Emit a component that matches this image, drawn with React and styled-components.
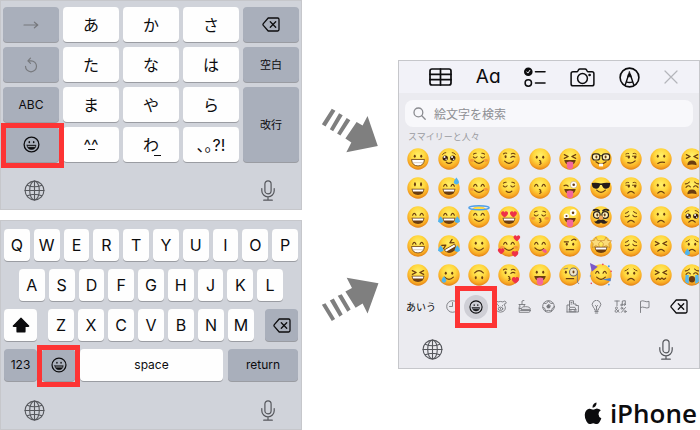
import React from "react";
import styled, { createGlobalStyle, css } from "styled-components";

const GlobalStyle = createGlobalStyle`
  *, *::before, *::after { box-sizing: border-box; }
  body {
    margin: 0;
    background: #fff;
    color: #0c0c0e;
    font-family: Inter, "Noto Sans CJK JP", sans-serif;
  }
  button {
    margin: 0;
    padding: 0;
    border: 0;
    background: none;
    color: inherit;
    font: inherit;
  }
  svg { display: block; flex: none; }
`;

/* ---------- layout ---------- */

const Page = styled.main`
  display: grid;
  grid-template-columns: 302fr 96fr 302fr;
  min-height: 100vh;
`;

const KeyboardColumn = styled.div`
  display: flex;
  flex-direction: column;
  gap: 10px;
`;

const ArrowColumn = styled.div`
  display: flex;
  flex-direction: column;
  align-items: center;
  gap: 122px;
  padding-top: 107px;
`;

const ResultColumn = styled.div`
  display: flex;
  flex-direction: column;
  min-width: 0;
  padding-top: 60px;
`;

const Panel = styled.section`
  display: flex;
  flex-direction: column;
  min-height: ${(p) => (p.$tall ? "309px" : "210px")};
  border: 1px solid #c6c7cb;
  background: ${(p) => (p.$tall ? "#ebebf0" : "#d0d3da")};
  overflow: ${(p) => (p.$tall ? "hidden" : "visible")};
`;

const PanelFooter = styled.div`
  display: flex;
  flex: 1;
  align-items: flex-end;
  justify-content: space-between;
  padding: 0 26px 8px 23px;
  color: #55575c;
`;

/* ---------- keys ---------- */

const redFrame = css`
  position: relative;
  &::after {
    content: "";
    position: absolute;
    inset: ${(p) => p.$frame};
    border: 5px solid #fd3434;
    pointer-events: none;
  }
`;

const Key = styled.button`
  display: flex;
  align-items: center;
  justify-content: center;
  min-width: 0;
  border-radius: 4px;
  background: ${(p) => (p.$dark ? "#a9afbb" : "#fefefe")};
  box-shadow: 0 1px 0 #9a9ca2;
  color: ${(p) => (p.$faded ? "#77797d" : "#0c0c0e")};
  font-size: ${(p) => p.$size || 16}px;
  line-height: 20px;
  ${(p) => p.$frame && redFrame}
`;

const PunctuationKey = styled(Key)`
  font-feature-settings: "halt";
`;

const MarkedGlyph = styled.span`
  position: relative;
  &::after {
    content: "";
    position: absolute;
    right: ${(p) => (p.$centered ? "calc(50% - 4px)" : "-2px")};
    bottom: ${(p) => (p.$centered ? "5px" : "-1px")};
    width: 7px;
    height: 1px;
    background: currentColor;
  }
`;

const KanaGrid = styled.div`
  display: grid;
  grid-template-columns: repeat(5, 1fr);
  grid-auto-rows: 35px;
  gap: 5px 4px;
  padding: 6px 2px 0;
`;

const TallKey = styled(Key)`
  grid-row: span 2;
`;

const QwertyRows = styled.div`
  display: flex;
  flex-direction: column;
  gap: 8px;
  padding: 8px 3px 0;
`;

const KeyRow = styled.div`
  display: grid;
  grid-template-columns: ${(p) => p.$columns};
  grid-auto-rows: 32px;
  gap: ${(p) => p.$gap || 4}px;
  padding: 0 ${(p) => p.$inset || 0}px;
`;

/* ---------- emoji panel ---------- */

const Toolbar = styled.div`
  display: flex;
  align-items: center;
  justify-content: space-between;
  height: 32px;
  padding: 0 21px 0 30px;
  background: #f2f2f8;
`;

const FontButton = styled.button`
  font-size: 19px;
  line-height: 24px;
  font-feature-settings: "cv11";
`;

const SearchBox = styled.label`
  display: flex;
  align-items: center;
  gap: 8px;
  height: 27px;
  margin: 7px 6px 0;
  padding: 0 8px;
  border-radius: 8px;
  background: #f8f8fb;
  color: #8a8b90;
`;

const SearchInput = styled.input`
  flex: 1;
  min-width: 0;
  padding: 0;
  border: 0;
  outline: 0;
  background: none;
  font: 12px/18px "Noto Sans CJK JP", sans-serif;
  color: #333;
  &::placeholder { color: #8e8f94; opacity: 1; }
`;

const GroupTitle = styled.h2`
  margin: 4px 0 0 9px;
  color: #9a9ba0;
  font-size: 9px;
  font-weight: 400;
  line-height: 12px;
`;

const EmojiGrid = styled.div`
  display: grid;
  grid-template-columns: repeat(10, 1fr);
  grid-auto-rows: 29px;
  margin: 1px -8px 0 4px;
`;

const EmojiButton = styled.button`
  display: flex;
  align-items: center;
  justify-content: center;
`;

const CategoryBar = styled.div`
  display: flex;
  align-items: center;
  height: 35px;
  padding: 0 11px 0 7px;
`;

const KanaSwitch = styled.button`
  width: 34px;
  text-align: left;
  font-size: 10px;
  line-height: 16px;
  white-space: nowrap;
`;

const CategoryList = styled.div`
  display: grid;
  grid-template-columns: repeat(9, 24px);
  flex: 1;
`;

const CategoryButton = styled.button`
  display: flex;
  align-items: center;
  justify-content: center;
  height: 24px;
  border-radius: 12px;
  color: ${(p) => (p.$frame ? "#0c0c0e" : "#77787d")};
  background: ${(p) => (p.$frame ? "#cfcfd6" : "none")};
  ${(p) => p.$frame && redFrame}
`;

const Brand = styled.div`
  display: flex;
  align-items: center;
  justify-content: flex-end;
  gap: 8px;
  margin-top: auto;
  padding: 0 3px 2px 0;
`;

const BrandName = styled.span`
  font-family: "Open Sans", sans-serif;
  font-size: 26px;
  font-weight: 600;
  line-height: 30px;
`;

/* ---------- icons ---------- */

const Icon = ({ w = 16, h = w, box = `0 0 ${w} ${h}`, sw = 1.2, children }) => (
  <svg width={w} height={h} viewBox={box} fill="none" stroke="currentColor" strokeWidth={sw}
    strokeLinecap="round" strokeLinejoin="round" aria-hidden="true">{children}</svg>
);

const GlobeIcon = () => (
  <Icon w={21} sw={1.1}>
    <circle cx="10.5" cy="10.5" r="9.4" />
    <ellipse cx="10.5" cy="10.5" rx="4.8" ry="9.4" />
    <path d="M10.5 1v19M1 10.5h19M3.2 5.2q7.3 3.2 14.6 0M3.2 15.8q7.3-3.2 14.6 0" />
  </Icon>
);
const MicIcon = () => (
  <Icon w={14} h={21} sw={1.2}>
    <rect x="3.9" y=".8" width="6.2" height="13" rx="3.1" />
    <path d="M.8 8.6v2.2a6.2 6 0 0 0 12.4 0V8.6M7 16.8v3.2M2.7 20.2h8.6" />
  </Icon>
);
const DeleteIcon = () => (
  <Icon w={18} h={15} sw={1.3}>
    <path d="M6.2 1h9.4q1.4 0 1.4 1.4v10.2q0 1.4-1.4 1.4H6.2L1.3 8.4q-.7-.9 0-1.8zM8.3 4.8l5.4 5.4M13.7 4.8l-5.4 5.4" />
  </Icon>
);
const ArrowIcon = () => (
  <Icon w={16} h={10}><path d="M1 5h13.5M11.4 2.2L14.8 5l-3.4 2.8" /></Icon>
);
const UndoIcon = () => (
  <Icon w={14} h={16}><path d="M4 3.8H7A5.5 5.5 0 1 1 1.5 9.3M6.5 1.2L3.9 3.8l2.6 2.6" /></Icon>
);
const ShiftIcon = () => (
  <Icon w={18} h={16}>
    <path d="M9 1.2L1.4 8.8q-.4.6.4.6H5v5q0 .6.6.6h6.8q.6 0 .6-.6v-5h3.2q.8 0 .4-.6z" fill="currentColor" />
  </Icon>
);
const SmileIcon = ({ size = 17 }) => (
  <Icon w={size} box="0 0 17 17" sw={1.3}>
    <circle cx="8.5" cy="8.5" r="7.4" />
    <path d="M4 9.2h9q-.5 4.3-4.5 4.3T4 9.2z" fill="currentColor" strokeWidth=".5" />
    <path d="M5.2 10.6h6.6" stroke="#b9bdc6" strokeWidth=".9" />
    <ellipse cx="6.3" cy="6.2" rx=".8" ry="1.1" fill="currentColor" stroke="none" />
    <ellipse cx="10.7" cy="6.2" rx=".8" ry="1.1" fill="currentColor" stroke="none" />
  </Icon>
);
const TableIcon = () => (
  <Icon w={23} h={18} sw={1.7}>
    <rect x="1" y="1" width="21" height="16" rx="2" />
    <path d="M1 6.3h21M1 11.7h21M11.5 1v16" />
  </Icon>
);
const ChecklistIcon = () => (
  <Icon w={22} h={21} sw={1.6}>
    <circle cx="4.3" cy="4.7" r="3.5" fill="currentColor" />
    <path d="M2.8 4.9l1.1 1.2 2-2.8" stroke="#f2f2f8" strokeWidth="1" />
    <circle cx="4.3" cy="16" r="3.2" strokeWidth="1.5" />
    <path d="M11.5 4.7h9.5M11.5 16h9.5" />
  </Icon>
);
const CameraIcon = () => (
  <Icon w={25} h={19} sw={1.5}>
    <path d="M3 3.8h3.9q.6 0 1-.8l.6-1.1q.5-.9 1.4-.9h5.2q.9 0 1.4.9l.6 1.1q.4.8 1 .8H22q1.9 0 1.9 1.9v10.2q0 1.9-1.9 1.9H3q-1.9 0-1.9-1.9V5.7Q1.1 3.8 3 3.8z" />
    <circle cx="12.5" cy="10.5" r="4.9" />
    <circle cx="19.6" cy="7" r=".6" fill="currentColor" />
  </Icon>
);
const PenIcon = () => (
  <Icon w={21} sw={1.6}>
    <circle cx="10.5" cy="10.5" r="9.4" />
    <path d="M6.2 18L9.7 7.5h1.6L14.8 18M7.4 14.8q3.1 1.4 6.2 0" strokeWidth="1.4" />
    <path d="M10.5 4.6l1.7 5.2H8.8z" fill="currentColor" strokeWidth=".6" />
  </Icon>
);
const CloseIcon = () => (
  <Icon w={14} sw={1.2}><path d="M1 1l12 12M13 1L1 13" stroke="#b4b5ba" /></Icon>
);
const SearchIcon = () => (
  <Icon w={13} sw={1.3}><circle cx="5.4" cy="5.4" r="4.4" /><path d="M8.8 8.8l3.4 3.4" /></Icon>
);

const categories = [
  ["最近使った絵文字", <Icon w={13} sw={0.9}><circle cx="6.5" cy="6.5" r="5.8" /><path d="M6.5 2.5v4H3.5" /></Icon>],
  ["スマイリーと人々", <SmileIcon size={14} />],
  ["動物と自然", <Icon w={13} sw={0.9}><path d="M3 4.2Q.4 4 .8 2.2 2 .2 4.2 1.9q2.3-.9 4.6 0Q11 .2 12.2 2.2q.4 1.8-2.2 2 1.9 2.6 1.2 5-1.2 3-4.7 3t-4.7-3q-.7-2.4 1.2-5z" /><ellipse cx="6.5" cy="8.8" rx="2.3" ry="1.7" /><path d="M4.5 5.5v.4M8.5 5.5v.4M6.5 8.4v.8" /></Icon>],
  ["食べ物と飲み物", <Icon w={13} sw={0.9}><path d="M1 4.5h6M1.6 4.5l.4 2.5M6.5 4.5L6 6.5M4 4.3V1l2-.6M3 9q0-2.3 4.7-2.3T12.4 9zM2.6 10.5h9.8M1.2 7v5.3h9.6q1.4 0 1.6-1.8M1.2 8.5h1.7" /></Icon>],
  ["活動", <Icon w={13} sw={0.9}><circle cx="6.5" cy="6.5" r="5.8" /><path d="M6.5 4.6L4.8 5.9l.6 2h2.2l.6-2z" fill="currentColor" /><path d="M2 3.2l2.3.3L6.5 1M11 3.2l-2.3.3L6.5 1M.9 7.5l1.7.6 1 2.9M12.1 7.5l-1.7.6-1 2.9M3.6 11l2.9-.6 2.9.6" /></Icon>],
  ["旅行と場所", <Icon w={13} sw={0.9}><path d="M1 12V5h2.5V.8h4V4H10v1M3.5 5v2M5 2.5h1M5 4h1M1 12h11.4V5.5H10M4.3 7.3h4.6l1 2.2v2.3H3.3V9.5zM3.3 9.5h6.6M4.6 10.8h.5M8.2 10.8h.5" /></Icon>],
  ["物", <Icon w={13} h={14} sw={0.9}><path d="M4.8 9.8Q4.7 8.5 3.3 7.2a4.2 4.2 0 1 1 6.4 0Q8.3 8.5 8.2 9.8zM4.9 11.5h3.2M5.3 13h2.4M6.5 9.5V6.5L5.3 5.5M6.5 6.5l1.2-1" /></Icon>],
  ["記号", <Icon w={13} sw={0.9}><path d="M.8 1h4.5M3 1v4.8M8.3 4.7V1l3-.3v3.6M5 12.3L1.5 8.4q-.2-1.3 1-1.3 1.3.1.9 1.4L1 10.6q-.3 1.6 1.3 1.7 1.8-.2 2.5-2.4M11.5 7.5l-4 4.8" /><circle cx="7.5" cy="5" r=".8" /><circle cx="10.5" cy="4.6" r=".8" /><circle cx="7.9" cy="8.3" r=".9" /><circle cx="11.2" cy="11.5" r=".9" /></Icon>],
  ["旗", <Icon w={11} h={13} sw={0.9}><path d="M1.5 12.5V1.3q2.2-1 4.3 0t4.2 0v6.2q-2.1 1-4.2 0t-4.3 0" /></Icon>],
];

const AppleLogo = () => (
  <svg width="18" height="23" viewBox="0 0 19 24" fill="#0c0c0e" aria-hidden="true">
    <path d="M13.2.4q.3 2.2-1.1 3.9-1.3 1.6-3.1 1.5-.3-2 1.2-3.7Q11.5.7 13.2.4zM17.7 8.5q-2.5 1.6-2.4 4.3.1 3 3 4.3-.7 2.3-2 4.1-1.3 2-2.9 2-.9 0-1.9-.5-1.8-.8-3.6 0-1 .5-1.8.5-1.8.1-3.4-2.7Q.6 17.3.8 13.2 1.2 8 5.4 7q1.2-.2 2.5.4 1.5.6 2 .5.5 0 2-.7 1.3-.5 2.5-.3 2.1.2 3.3 1.6z" />
  </svg>
);

const ArrowDown = () => (
  <svg width="60" height="47" viewBox="510 20 180 142" fill="#7f7f7f" aria-hidden="true">
    <path d="M545 25l11 6-30 48-11-7zM567 39l11 6-29 48-10-6zM590 53l11 7-30 46-10-6zM620 65l18 11 15-29 31 91-95 19 15-30-18-12z" />
  </svg>
);
const ArrowUp = () => (
  <svg width="60" height="47" viewBox="510 183 180 142" fill="#7f7f7f" aria-hidden="true">
    <path d="M515 270l11-5 29 48-10 6zM539 257l12-6 27 48-10 7zM563 243l12-5 27 46-10 7zM586 230l20-11-16-31 96 17-33 91-15-30-21 13z" />
  </svg>
);

/* ---------- emoji faces ---------- */

const B = "#6b3d10";
const heart = (x, y, s) => (
  <path transform={`translate(${x} ${y}) scale(${s})`} fill="#ee3148"
    d="M0 3.4Q-4 .8-3.6-1.4-3-3.5-1-3-.2-2.7 0-1.7.2-2.7 1-3 3-3.5 3.6-1.4 4 .8 0 3.4z" />
);
const Stroke = ({ d, c = B, w = 1.3 }) => (
  <path d={d} fill="none" stroke={c} strokeWidth={w} strokeLinecap="round" strokeLinejoin="round" />
);
const Dot = ({ x, y = 9, rx = 1.1, ry = 1.6, c = B }) => <ellipse cx={x} cy={y} rx={rx} ry={ry} fill={c} />;
const drop = (x, y, s = 1) => (
  <path transform={`translate(${x} ${y}) scale(${s})`} fill="#4fb4ee" d="M0-3.2Q2.6 0 2.3 1.4 1.8 3 0 3T-2.3 1.4Q-2.6 0 0-3.2z" />
);
const star = (x, y) => (
  <path transform={`translate(${x} ${y}) scale(1.15)`} fill="#fbdc7a" stroke="#b8742a" strokeWidth=".5"
    d="M0-5l1.5 3.2 3.7.4L2.5 1.2 3.3 5 0 3.1-3.3 5l.8-3.8-2.7-2.6 3.7-.4z" />
);
const wetEye = (x) => (
  <g>
    <circle cx={x} cy="11" r="2.9" fill="#3a1d0c" />
    <circle cx={x - 0.8} cy="9.9" r="1.1" fill="#fff" />
    <circle cx={x + 1} cy="12.3" r=".8" fill="#e9f4ff" />
  </g>
);

const eyes = {
  dots: <><Dot x={8.5} /><Dot x={15.5} /></>,
  tall: <><Dot x={8.7} y={8} ry={2.3} /><Dot x={15.3} y={8} ry={2.3} /></>,
  low: <><Dot x={8.5} y={10} /><Dot x={15.5} y={10} /></>,
  happy: <Stroke d="M6.2 10Q8 6.3 9.8 10M14.2 10Q16 6.3 17.8 10" />,
  closed: <Stroke d="M5.8 9.6Q8 12 10 9.6M14 9.6Q16.2 12 18.2 9.6M6 6.8Q7.2 5.6 9 5.8M18 6.8Q16.8 5.6 15 5.8" w={1.1} />,
  sad: <Stroke d="M5.8 11.5Q8.5 12.5 10 10M18.2 11.5Q15.5 12.5 14 10M6 8Q8 7.6 9.2 6M18 8Q16 7.6 14.8 6" w={1.1} />,
  squeeze: <Stroke d="M5.8 7.3L10 9.3 5.8 11.3M18.2 7.3L14 9.3l4.2 2" />,
  wink: <><Dot x={8.3} y={9.5} /><Stroke d="M14 10.3Q16 8.3 18.4 9.8M6 6.5Q7.5 5 9.5 5.8M14.5 6.5Q16.5 5 18.5 6.8" w={1.1} /></>,
  goofy: <><circle cx="16" cy="8.5" r="3.7" fill="#fff" stroke="#9a6a2c" strokeWidth=".4" /><Dot x={16} y={8.5} rx={1.4} ry={1.4} /><Stroke d="M5.5 9.5Q8 7.8 10 10" /></>,
  crazy: <><circle cx="8" cy="11" r="2.8" fill="#fff" /><Dot x={8.2} y={10.8} ry={1.1} /><circle cx="15.5" cy="7.2" r="3.6" fill="#fff" /><Dot x={15.3} y={7.5} rx={1.4} ry={1.4} /></>,
  side: <><Dot x={9.6} y={10} /><Dot x={16.5} y={10} /><Stroke d="M6.5 9h4M13.5 9h4.2M6.4 6.5Q8 5.5 9.5 6M14.3 6Q16 5.3 17.6 6.5" w={1} /></>,
  wet: <>{wetEye(7.9)}{wetEye(16.1)}<Stroke d="M5 7Q6.5 5 8.5 5M19 7Q17.5 5 15.5 5" w={1} /></>,
  nerd: <><g fill="#fff3c0" stroke="#33241a" strokeWidth="1.3"><rect x="2.6" y="6.5" width="8" height="6.6" rx="2.8" /><rect x="13.4" y="6.5" width="8" height="6.6" rx="2.8" /></g><Stroke d="M10.5 8.5h3" c="#33241a" /><Dot x={7} y={9.8} /><Dot x={17} y={9.8} /></>,
  shades: <path d="M2 6.5q5-.8 10 .5 5-1.3 10-.5l-.6 4q-1 2.5-4.2 2.3-3.2-.1-4.2-4h-2q-1 3.9-4.2 4-3.2.2-4.2-2.3z" fill="#241c1a" />,
  hearts: <>{heart(7.2, 9, 1.05)}{heart(16.8, 9, 1.05)}</>,
  disguise: <><g fill="#fff3c0" stroke="#2b211d" strokeWidth="1.3"><circle cx="7.5" cy="9.8" r="3.6" /><circle cx="16.5" cy="9.8" r="3.6" /></g><Stroke d="M4 4.8Q7 3 9.8 5.2M20 4.8Q17 3 14.2 5.2" c="#2b211d" w={2} /><Dot x={8} y={9.8} /><Dot x={16} y={9.8} /><ellipse cx="12" cy="13" rx="2.3" ry="2.7" fill="#f2a95c" /></>,
  stars: <>{star(6.5, 8)}{star(17.5, 8)}</>,
  raised: <><Dot x={8.5} y={10} /><Dot x={15.5} y={10} /><Stroke d="M5.8 7.5h4.5M13.8 6Q16 3.5 18.5 5.5" w={1.3} /></>,
  monocle: <><Dot x={7.5} y={9} /><circle cx="15.8" cy="8.8" r="4.3" fill="#eee5cc" stroke="#69656a" strokeWidth="1.1" /><Dot x={15.8} y={8.8} /><Stroke d="M20 9v9.5q0 2 1.5 3M5.5 5.5l4-.8" c="#77747a" w={0.9} /></>,
  weary: <Stroke d="M4.8 7.5Q7 8 9.2 5.5M19.2 7.5Q17 8 14.8 5.5M5.5 11.3Q8 8.2 10.2 10.8M18.5 11.3Q16 8.2 13.8 10.8" w={1.2} />,
  worry: <><Dot x={8.5} y={10} /><Dot x={15.5} y={10} /><Stroke d="M5.5 7.5Q7.5 7 9 5.5M18.5 7.5Q16.5 7 15 5.5" w={1} /></>,
  tilt: <Stroke d="M5.5 7.5L9.5 9.5 5.5 11.5M18.5 7.5l-4 2 4 2" />,
};

const mouths = {
  grin: <><path d="M5 12.8h14q-.6 6.7-7 6.7t-7-6.7z" fill={B} /><path d="M6 13.5h12l-.6 2.2H6.6z" fill="#fff" /></>,
  teeth: <><path d="M5 12.5h14q-.6 7-7 7t-7-7z" fill="#fff" stroke={B} strokeWidth=".9" /><path d="M6 16h12" stroke="#b9a58d" strokeWidth=".6" /></>,
  smile: <Stroke d="M7.3 14.3Q12 19 16.7 14.3" />,
  small: <Stroke d="M9 15.5Q12 17.8 15 15.5" />,
  frown: <Stroke d="M8.5 17.5Q12 13.8 15.5 17.5" />,
  kiss: <Stroke d="M11.3 13.5q3 .6.6 2 2.9.8-.2 2.4" w={1.1} />,
  flat: <Stroke d="M8 16h8" />,
  smirk: <Stroke d="M8.5 16Q13 17.5 16.5 14" />,
  skew: <Stroke d="M8.5 16.8Q12 14.6 15.8 15.6" />,
  wavy: <Stroke d="M7 17l2-1.8 2 1.6 2-1.6 2 1.6 2-1.4" />,
  tongue: <><path d="M5.8 13h12.4q-.7 5.5-6.2 5.5T5.8 13z" fill={B} /><path d="M8.5 15.5q3.5-1.6 7 0v4q-.4 3.6-3.5 3.6t-3.5-3.6z" fill="#f4679b" /></>,
  lick: <><Stroke d="M6.5 14Q11 19 16 14.8" /><path d="M14 16.5q3-2.5 5 0 1.2 2.2-.6 3-2 .8-4.4-3z" fill="#f05a90" /></>,
  open: <path d="M7 18.8Q7 13.5 12 13.5t5 5.3q-5-1.6-10 0z" fill={B} />,
  wail: <ellipse cx="12" cy="16.5" rx="3.3" ry="3.5" fill={B} />,
  nerdTeeth: <><Stroke d="M6.5 15Q12 20 17.5 15" /><path d="M9.8 17h4.4v3H9.8z" fill="#fff" /></>,
  moustache: <path d="M12 15.3q3-1.3 4.5.8 1.2 1.2 2.7.2-.7 3.2-4 3-2-.2-3.2-1.4-1.2 1.2-3.2 1.4-3.3.2-4-3 1.5 1 2.7-.2 1.5-2.1 4.5-.8z" fill="#2b211d" />,
};

const cheeks = <g fill="#f0703c" opacity=".5"><ellipse cx="4.8" cy="13.3" rx="2.4" ry="1.7" /><ellipse cx="19.2" cy="13.3" rx="2.4" ry="1.7" /></g>;
const extras = {
  blush: cheeks,
  sweat: drop(20, 4.5, 1.2),
  joy: <>{drop(3, 15, 1.2)}{drop(21, 15, 1.2)}</>,
  halo: <ellipse cx="12" cy="2" rx="11" ry="2.2" fill="none" stroke="#4f9fe8" strokeWidth="1.5" />,
  love: <>{cheeks}{heart(20.5, 3.5, 1)}{heart(3.5, 17.5, 1)}{heart(18.5, 20.5, 1)}</>,
  kissHeart: heart(19, 17.5, 1.1),
  tear: drop(6.5, 17, 1.1),
  tearLow: drop(7, 18.5, 1.2),
  streams: <path d="M5 12h3.5v9.5Q6 21 4.5 19zM15.5 12H19l.5 7q-1.5 2-4 2.5z" fill="#56b8f0" />,
  party: <><path d="M0-1l8.5 4-6.5 5.5z" fill="#7b58c8" /><path d="M13.5 17l9 1.7v-3.4z" fill="#4b7fd0" /><g fill="#e8445a"><circle cx="14" cy=".5" r=".9" /><circle cx="23" cy="8" r=".9" /><circle cx="1.5" cy="21" r=".9" /></g><g fill="#3f9be8"><circle cx="20.5" cy="2.5" r="1" /><circle cx="20.5" cy="22.5" r=".9" /><circle cx=".5" cy="13" r=".7" /></g></>,
};

const faces = [
  ["にっこり", "dots", "teeth"], ["うるうる", "wet", "small"], ["ほほえみ", "closed", "smile", "blush"], ["ウインク", "wink", "smile"], ["キス", "low", "kiss"],
  ["ぎゅっと目を閉じて舌を出す", "squeeze", "tongue"], ["眼鏡", "nerd", "nerdTeeth"], ["にやり", "side", "smirk"], ["困惑", "dots", "skew"], ["疲れた", "squeeze", "open"],
  ["大きく笑う", "tall", "grin"], ["冷や汗", "happy", "grin", "sweat"], ["照れ笑い", "happy", "smile", "blush"], ["ほっとした", "closed", "small"], ["笑顔でキス", "happy", "kiss"],
  ["ウインクして舌を出す", "goofy", "tongue"], ["サングラス", "shades", "smile"], ["不満", "side", "frown"], ["少し悲しい", "dots", "frown"], ["うんざり", "weary", "open"],
  ["目を細めて笑う", "happy", "grin"], ["うれし泣き", "happy", "grin", "joy"], ["天使", "happy", "smile", "halo"], ["目がハート", "hearts", "grin"], ["目を閉じてキス", "closed", "kiss", "blush"],
  ["おどけ顔", "crazy", "tongue"], ["変装", "disguise", "moustache"], ["がっかり", "sad", "frown"], ["しかめっ面", "dots", "frown"], ["お願い", "wet", "frown"],
  ["歯を見せて笑う", "happy", "teeth"], ["笑い転げる", "tilt", "grin", "joy", -30], ["ほほえむ", "dots", "smile"], ["ハートに囲まれた顔", "happy", "smile", "love"], ["おいしい", "happy", "lick"],
  ["眉を上げる", "raised", "flat"], ["目が星", "stars", "grin"], ["しょんぼり", "sad", "small"], ["我慢", "squeeze", "frown"], ["泣き顔", "worry", "frown", "tearLow"],
  ["大笑い", "squeeze", "grin"], ["泣き笑い", "low", "smile", "tear"], ["逆さま", "dots", "smile", null, 180], ["投げキス", "wink", "kiss", "kissHeart"], ["舌を出す", "dots", "tongue"],
  ["片眼鏡", "monocle", "flat"], ["パーティー", "happy", "smile", "party"], ["心配", "worry", "frown"], ["混乱", "squeeze", "wavy"], ["大泣き", "weary", "wail", "streams"],
];

const Face = ({ eye, mouth, extra, turn = 0 }) => (
  <svg width="24" height="24" viewBox="-1 -1 26 26" overflow="visible" aria-hidden="true">
    <circle cx="12" cy="12" r="11.6" fill="url(#skin)" />
    <g transform={`rotate(${turn} 12 12)`}>
      {extra === "blush" && extras.blush}
      {eyes[eye]}
      {mouths[mouth]}
    </g>
    {extra && extra !== "blush" && extras[extra]}
  </svg>
);

const SkinGradient = () => (
  <svg width="0" height="0" aria-hidden="true">
    <defs>
      <radialGradient id="skin" cx=".5" cy=".34" r=".68">
        <stop offset="0" stopColor="#fff06a" />
        <stop offset=".45" stopColor="#ffd83f" />
        <stop offset=".78" stopColor="#f8a924" />
        <stop offset="1" stopColor="#dd7a14" />
      </radialGradient>
    </defs>
  </svg>
);

/* ---------- keyboards ---------- */

const Footer = () => (
  <PanelFooter>
    <button aria-label="次のキーボード"><GlobeIcon /></button>
    <button aria-label="音声入力"><MicIcon /></button>
  </PanelFooter>
);

const KanaKeyboard = () => (
  <Panel aria-label="日本語かなキーボード">
    <KanaGrid>
      <Key $dark $faded aria-label="次候補"><ArrowIcon /></Key>
      <Key>あ</Key><Key>か</Key><Key>さ</Key>
      <Key $dark aria-label="削除"><DeleteIcon /></Key>
      <Key $dark $faded aria-label="元に戻す"><UndoIcon /></Key>
      <Key>た</Key><Key>な</Key><Key>は</Key>
      <Key $dark $size={11}>空白</Key>
      <Key $dark $size={12}>ABC</Key>
      <Key>ま</Key><Key>や</Key><Key>ら</Key>
      <TallKey $dark $size={11}>改行</TallKey>
      <Key $dark $frame="-4px -5px -6px -2px" aria-label="絵文字"><SmileIcon /></Key>
      <Key aria-label="顔文字"><MarkedGlyph $centered>^^</MarkedGlyph></Key>
      <Key><MarkedGlyph>わ</MarkedGlyph></Key>
      <PunctuationKey>、。?!</PunctuationKey>
    </KanaGrid>
    <Footer />
  </Panel>
);

const letters = (text) => [...text].map((c) => <Key key={c}>{c}</Key>);

const QwertyKeyboard = () => (
  <Panel aria-label="英語キーボード">
    <QwertyRows>
      <KeyRow $columns="repeat(10, 1fr)">{letters("QWERTYUIOP")}</KeyRow>
      <KeyRow $columns="repeat(9, 1fr)" $inset={15}>{letters("ASDFGHJKL")}</KeyRow>
      <KeyRow $columns="33fr 206fr 33fr" $gap={11}>
        <Key aria-label="シフト"><ShiftIcon /></Key>
        <KeyRow $columns="repeat(7, 1fr)">{letters("ZXCVBNM")}</KeyRow>
        <Key $dark aria-label="削除"><DeleteIcon /></Key>
      </KeyRow>
      <KeyRow $columns="33fr 33fr 143fr 70fr" $gap={5}>
        <Key $dark $size={12}>123</Key>
        <Key $dark $frame="-4px -5px -6px" aria-label="絵文字"><SmileIcon size={16} /></Key>
        <Key $size={12}>space</Key>
        <Key $dark $size={12}>return</Key>
      </KeyRow>
    </QwertyRows>
    <Footer />
  </Panel>
);

const EmojiKeyboard = () => (
  <Panel $tall aria-label="絵文字キーボード">
    <Toolbar>
      <button aria-label="表"><TableIcon /></button>
      <FontButton aria-label="書式">Aa</FontButton>
      <button aria-label="チェックリスト"><ChecklistIcon /></button>
      <button aria-label="カメラ"><CameraIcon /></button>
      <button aria-label="マークアップ"><PenIcon /></button>
      <button aria-label="閉じる"><CloseIcon /></button>
    </Toolbar>
    <SearchBox>
      <SearchIcon />
      <SearchInput type="text" placeholder="絵文字を検索" aria-label="絵文字を検索" />
    </SearchBox>
    <GroupTitle>スマイリーと人々</GroupTitle>
    <EmojiGrid>
      {faces.map(([name, eye, mouth, extra, turn]) => (
        <EmojiButton key={name} aria-label={name}>
          <Face eye={eye} mouth={mouth} extra={extra} turn={turn} />
        </EmojiButton>
      ))}
    </EmojiGrid>
    <CategoryBar>
      <KanaSwitch>あいう</KanaSwitch>
      <CategoryList>
        {categories.map(([name, icon], i) => (
          <CategoryButton key={name} aria-label={name} $frame={i === 1 ? "-9px" : undefined}>{icon}</CategoryButton>
        ))}
      </CategoryList>
      <button aria-label="削除"><DeleteIcon /></button>
    </CategoryBar>
    <Footer />
  </Panel>
);

export default function App() {
  return (
    <>
      <SkinGradient />
      <GlobalStyle />
      <Page>
        <KeyboardColumn>
          <KanaKeyboard />
          <QwertyKeyboard />
        </KeyboardColumn>
        <ArrowColumn>
          <ArrowDown />
          <ArrowUp />
        </ArrowColumn>
        <ResultColumn>
          <EmojiKeyboard />
          <Brand>
            <AppleLogo />
            <BrandName>iPhone</BrandName>
          </Brand>
        </ResultColumn>
      </Page>
    </>
  );
}
